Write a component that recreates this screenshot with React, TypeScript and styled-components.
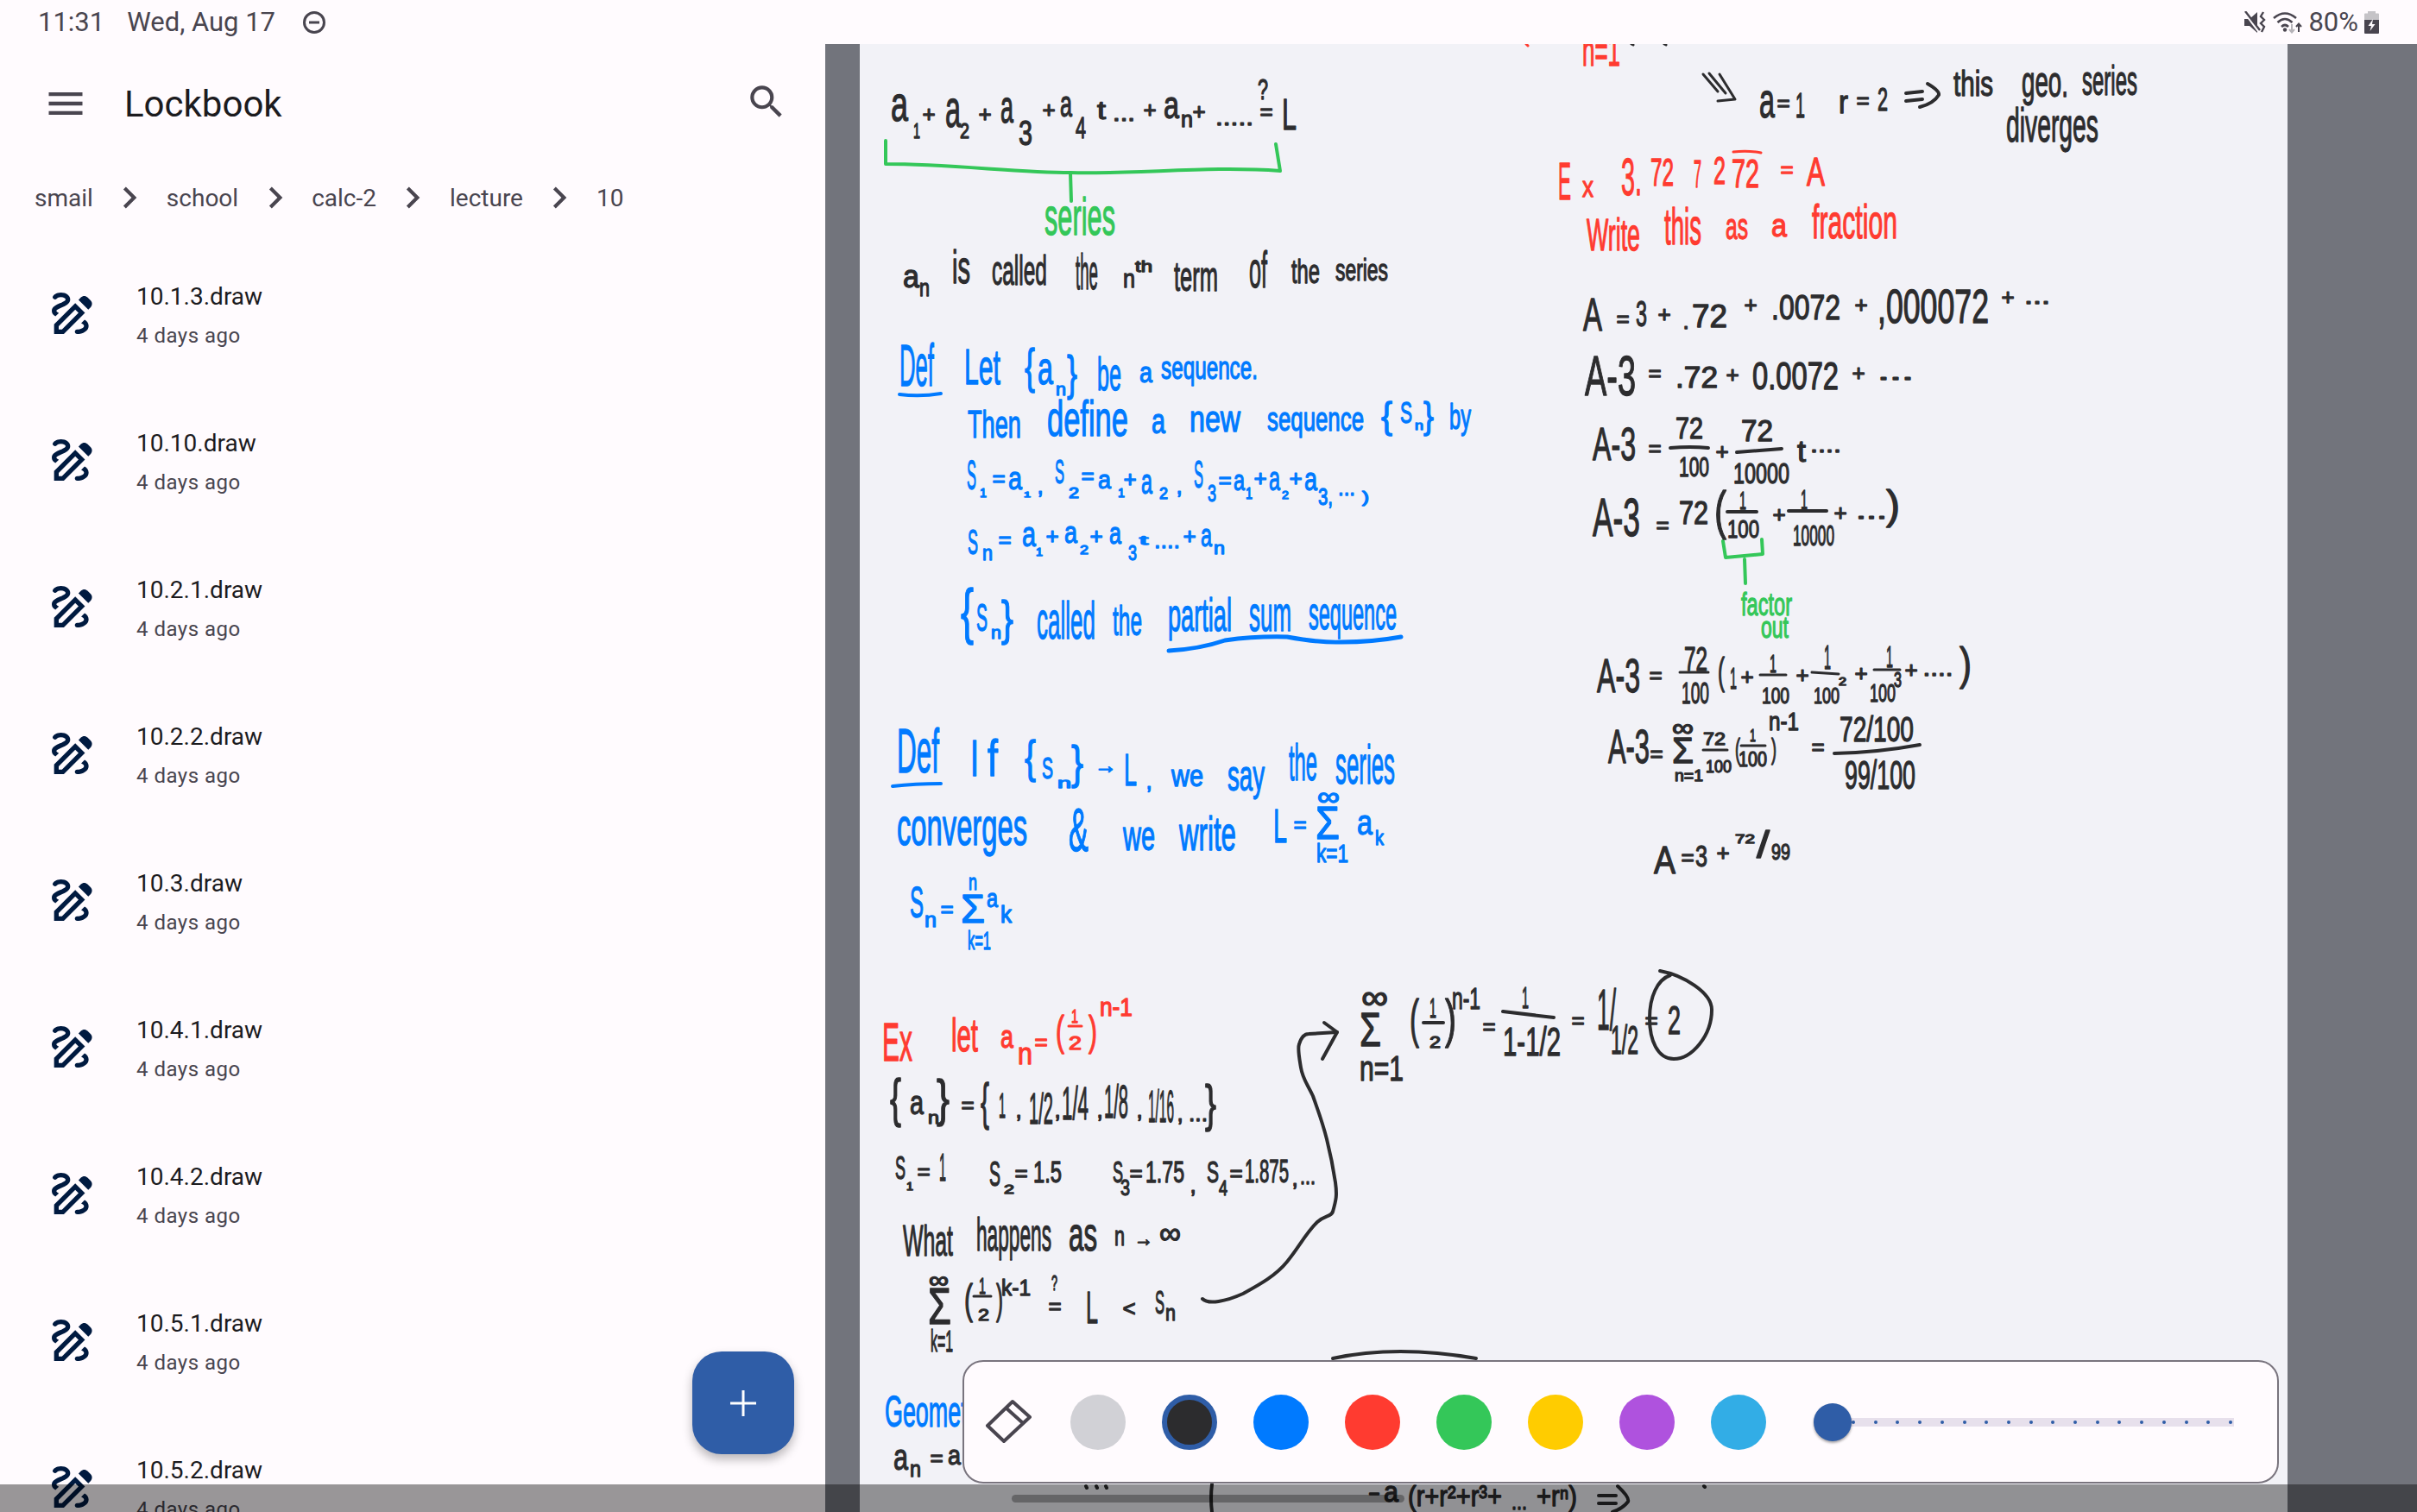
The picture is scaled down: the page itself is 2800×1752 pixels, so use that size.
import React from 'react';
import styled, { createGlobalStyle } from 'styled-components';
import { MdOutlineDraw, MdMenu, MdSearch, MdChevronRight } from 'react-icons/md';

const GlobalStyle = createGlobalStyle`
  html, body { margin: 0; padding: 0; background: #fffbfe; }
  body { font-family: Roboto, "Liberation Sans", sans-serif; }
`;

// ------- page frame -------

const Screen = styled.div`
  position: relative;
  width: 2800px;
  height: 1752px;
  display: flex;
  flex-direction: column;
  overflow: hidden;
  background: #fffbfe;
`;

const StatusBar = styled.div`
  height: 51px;
  flex: none;
  display: flex;
  align-items: center;
  padding: 0 44px;
  font-size: 31px;
  color: #49454f;
`;

const StatusDate = styled.span`
  margin-left: 26px;
`;

const StatusRight = styled.div`
  margin-left: auto;
  display: flex;
  align-items: center;
  gap: 7px;
`;

const Body = styled.div`
  flex: 1;
  min-height: 0;
  display: flex;
`;

// ------- file list pane -------

const Pane = styled.div`
  position: relative;
  width: 956px;
  flex: none;
  overflow: hidden;
`;

const AppBar = styled.div`
  height: 138px;
  display: flex;
  align-items: center;
  padding: 0 43px 0 50px;
  color: #49454f;
`;

const Title = styled.h1`
  margin: 0 0 0 42px;
  font-size: 42px;
  font-weight: 400;
  color: #1c1b1f;
`;

const SearchIcon = styled(MdSearch)`
  margin-left: auto;
  margin-top: -4px;
`;

const Crumbs = styled.div`
  height: 80px;
  margin-bottom: 9px;
  display: flex;
  align-items: center;
  gap: 17.5px;
  padding-left: 40px;
  font-size: 28px;
  color: #49454f;
`;

const Row = styled.div`
  height: 170px;
  display: flex;
  align-items: center;
  padding-left: 52px;
  gap: 42px;
`;

const RowIcon = styled(MdOutlineDraw)`
  color: #001a40;
  flex: none;
`;

const RowName = styled.div`
  font-size: 28px;
  line-height: 36px;
  color: #1c1b1f;
  margin-top: 4px;
`;

const RowDate = styled.div`
  font-size: 24px;
  line-height: 32px;
  letter-spacing: 0.5px;
  margin-top: 11px;
  color: #49454f;
`;

const Fab = styled.button`
  position: absolute;
  right: 36px;
  bottom: 67px;
  width: 118px;
  height: 119px;
  padding: 0;
  border: none;
  border-radius: 34px;
  background: #2f5da7;
  box-shadow: 0 6px 12px rgba(0, 0, 0, 0.28);
  display: flex;
  align-items: center;
  justify-content: center;
`;

// ------- drawing editor -------

const Editor = styled.div`
  flex: 1;
  display: flex;
  padding: 0 150px 0 40px;
  background: #72747c;
`;

const Sheet = styled.div`
  position: relative;
  flex: 1;
  overflow: hidden;
  background: #f2f2f7;
`;

const SheetSvg = styled.svg`
  display: block;
  width: 100%;
  height: 100%;
`;

const TONES = { k: '#2c2c2e', b: '#007aff', r: '#ff3b30', g: '#34c759' };
type Tone = keyof typeof TONES;

const InkText = styled.text<{ $tone: Tone }>`
  font-family: "Liberation Sans", sans-serif;
  fill: ${p => TONES[p.$tone]};
  stroke: ${p => TONES[p.$tone]};
  stroke-width: 1.3px;
  stroke-linejoin: round;
`;

const InkLine = styled.path<{ $tone: Tone; $w: number }>`
  fill: none;
  stroke: ${p => TONES[p.$tone]};
  stroke-width: ${p => p.$w}px;
  stroke-linecap: round;
  stroke-linejoin: round;
`;

const Toolbar = styled.div`
  position: absolute;
  left: 119px;
  right: 10px;
  bottom: 33px;
  height: 143px;
  box-sizing: border-box;
  display: flex;
  align-items: center;
  padding-left: 24px;
  background: #fffbfe;
  border: 2px solid #79747e;
  border-radius: 24px;
`;

const Swatches = styled.div`
  display: flex;
  gap: 42px;
  margin-left: 45px;
`;

const Swatch = styled.div<{ $color: string; $active?: boolean }>`
  width: 64px;
  height: 64px;
  box-sizing: border-box;
  border-radius: 50%;
  background: ${p => p.$color};
  border: ${p => (p.$active ? '6px solid #2f5da7' : 'none')};
`;

const Slider = styled.div`
  position: relative;
  width: 487px;
  margin-left: 55px;
  height: 44px;
  display: flex;
  align-items: center;
`;

const SliderTrack = styled.div`
  flex: 1;
  margin-left: 22px;
  height: 10px;
  padding: 0 2px 0 22px;
  display: flex;
  align-items: center;
  justify-content: space-between;
  background: #e7e0ec;
`;

const SliderTick = styled.div`
  width: 4px;
  height: 4px;
  border-radius: 50%;
  background: #2f5da7;
`;

const SliderThumb = styled.div`
  position: absolute;
  left: 0;
  top: 0;
  width: 44px;
  height: 44px;
  border-radius: 50%;
  background: #2f5da7;
  box-shadow: 0 2px 3px rgba(0, 0, 0, 0.35);
`;

const NavBar = styled.div`
  position: absolute;
  left: 0;
  right: 0;
  bottom: 0;
  height: 32px;
  background: rgba(0, 0, 0, 0.4);
`;

const NavPill = styled.div`
  position: absolute;
  left: 1172px;
  top: 12px;
  width: 455px;
  height: 9px;
  border-radius: 5px;
  background: rgba(0, 0, 0, 0.3);
`;

// ------- ink data -------
// fitted marks: [text, x1, x2, y1, y2]; loose marks: [text, cx, cy, width?]

type Mark = [string, number, number, number?, number?];

const HAS_ASC = /[A-Z0-9bdfhklt{}()&?!/Σ]/;
const HAS_DESC = /[gjpqy{}()]/;

const BLACK: Mark[] = [
  ['a', 1032, 1052, 110, 140], ['1', 1058, 1066, 143, 160], ['+', 1076, 133], ['a', 1095, 1113, 115, 147],
  ['2', 1112, 1123, 143, 160], ['+', 1141, 133], ['a', 1159, 1174, 115, 142], ['3', 1180, 1196, 138, 168],
  ['+', 1215, 128], ['a', 1228, 1242, 112, 135], ['4', 1246, 1258, 135, 160], ['t', 1271, 1281, 117, 138],
  ['...', 1302, 138, 26], ['+', 1332, 128], ['a', 1348, 1366, 113, 137], ['n', 1368, 1382, 133, 147],
  ['+', 1389, 130], ['.....', 1430, 143, 44], ['?', 1457, 1469, 91, 115], ['=', 1467, 130], ['L', 1485, 1502, 113, 150],
  ['a', 1046, 1065, 313, 333], ['n', 1065, 1077, 328, 343], ['is', 1103, 1124, 300, 328], ['called', 1149, 1213, 295, 330],
  ['the', 1246, 1272, 293, 335], ['n', 1301, 1315, 317, 333], ['th', 1315, 1335, 302, 315], ['term', 1360, 1411, 302, 337],
  ['of', 1447, 1468, 290, 333], ['the', 1496, 1529, 300, 328], ['series', 1547, 1608, 306, 325],
  ['a', 2038, 2056, 106, 136], ['=', 2066, 120], ['1', 2080, 2091, 106, 136], ['r', 2130, 2141, 111, 131], ['=', 2158, 117],
  ['2', 2175, 2187, 101, 128], ['this', 2263, 2309, 81, 111], ['geo.', 2342, 2396, 85, 122],
  ['series', 2412, 2476, 85, 110], ['diverges', 2324, 2431, 124, 176],
  ['A', 1834, 1856, 344, 383], ['=', 1880, 370], ['3', 1895, 1908, 347, 378], ['+', 1928, 365], ['.', 1953, 379],
  ['72', 1960, 2001, 352, 379], ['+', 2028, 354], ['.0072', 2052, 2132, 340, 370], ['+', 2156, 354], [',000072', 2175, 2304, 333, 374],
  ['+', 2326, 345], ['...', 2360, 350, 30],
  ['A-3', 1836, 1895, 411, 458], ['=', 1917, 433], ['.72', 1941, 1990, 424, 449], ['+', 2007, 435], ['0.0072', 2030, 2130, 419, 451],
  ['+', 2153, 433], ['...', 2196, 438, 42],
  ['A-3', 1845, 1895, 494, 533], ['=', 1917, 520], ['72', 1941, 1973, 483, 508], ['100', 1945, 1980, 529, 552], ['+', 1995, 524],
  ['72', 2017, 2054, 486, 511], ['10000', 2008, 2073, 536, 560], ['t', 2082, 2092, 510, 535], ['....', 2115, 522, 36],
  ['A-3', 1845, 1900, 575, 621], ['=', 1926, 609], ['72', 1945, 1979, 580, 607], ['(', 1986, 2000, 568, 625],
  ['1', 2015, 2023, 569, 590], ['100', 2001, 2038, 602, 623], ['+', 2061, 597], ['1', 2086, 2094, 567, 590],
  ['10000', 2077, 2125, 608, 632], ['+', 2132, 595], ['...', 2168, 599, 36], [')', 2185, 2201, 567, 611],
  ['A-3', 1850, 1900, 762, 802], ['=', 1918, 783], ['72', 1951, 1978, 749, 777], ['100', 1948, 1980, 789, 815],
  ['(', 1990, 1998, 760, 802], ['1', 2004, 2012, 773, 798], ['+', 2024, 785], ['1', 2050, 2058, 758, 779],
  ['100', 2041, 2073, 796, 815], ['+', 2088, 783], ['1', 2113, 2121, 747, 775], ['100', 2101, 2131, 796, 815],
  ['2', 2130, 2139, 785, 794], ['+', 2156, 781], ['1', 2185, 2193, 747, 773], ['100', 2166, 2196, 791, 813], ['3', 2194, 2203, 779, 796],
  ['+', 2214, 777], ['....', 2245, 781, 35], [')', 2270, 2284, 749, 798],
  ['A-3', 1863, 1911, 844, 884], ['=', 1919, 874], ['Σ', 1937, 1962, 853, 884], ['∞', 1937, 1962, 838, 853], ['n=1', 1940, 1973, 892, 905],
  ['72', 1973, 1999, 848, 863], ['100', 1976, 2006, 880, 895], ['(', 2010, 2016, 854, 886], ['1', 2027, 2034, 844, 859],
  ['100', 2014, 2047, 871, 888], [')', 2052, 2058, 854, 886], ['n-1', 2049, 2084, 825, 846], ['=', 2106, 866],
  ['72/100', 2131, 2217, 829, 859], ['99/100', 2137, 2219, 880, 914],
  ['A', 1916, 1941, 979, 1012], ['=', 1955, 994], ['3', 1964, 1978, 979, 1004], ['+', 1996, 989], ['72', 2010, 2033, 966, 977],
  ['/', 2035, 2050, 962, 994], ['99', 2052, 2074, 977, 996],
  ['Σ', 1575, 1600, 1171, 1212], ['∞', 1577, 1608, 1148, 1169], ['n=1', 1575, 1626, 1223, 1252], ['(', 1633, 1644, 1156, 1214],
  ['1', 1656, 1664, 1156, 1179], ['2', 1656, 1669, 1200, 1214], [')', 1674, 1687, 1156, 1214], ['n-1', 1682, 1715, 1144, 1169], ['=', 1725, 1190],
  ['1', 1763, 1771, 1143, 1168], ['1-1/2', 1741, 1808, 1189, 1223], ['=', 1828, 1183], ['1/', 1850, 1872, 1145, 1193], ['1/2', 1866, 1898, 1187, 1221],
  ['=', 1913, 1183], ['2', 1932, 1947, 1164, 1198],
  ['{', 1031, 1044, 1248, 1306], ['a', 1054, 1070, 1270, 1291], ['n', 1075, 1088, 1291, 1302], ['}', 1085, 1100, 1250, 1306],
  ['=', 1121, 1281], ['{', 1136, 1146, 1254, 1310], ['1', 1157, 1165, 1266, 1295], [',', 1180, 1293], ['1/2', 1192, 1220, 1266, 1302], [',', 1225, 1293],
  ['1/4', 1230, 1261, 1258, 1297], [',', 1274, 1293], ['1/8', 1279, 1307, 1256, 1295], [',', 1320, 1293], ['1/16', 1330, 1360, 1262, 1300],
  [',', 1367, 1297], ['...', 1388, 1297, 22], ['}', 1396, 1409, 1256, 1312],
  ['S', 1037, 1049, 1339, 1366], ['1', 1050, 1058, 1370, 1379], ['=', 1070, 1358], ['1', 1088, 1096, 1335, 1368],
  ['S', 1146, 1159, 1345, 1374], ['2', 1163, 1175, 1372, 1383], ['=', 1183, 1360], ['1.5', 1197, 1230, 1345, 1370],
  ['S', 1289, 1301, 1345, 1370], ['3', 1298, 1309, 1366, 1385], ['=', 1316, 1360], ['1.75', 1327, 1372, 1345, 1370], [',', 1382, 1380],
  ['S', 1398, 1412, 1345, 1370], ['4', 1412, 1422, 1368, 1385], ['=', 1432, 1360], ['1.875', 1442, 1493, 1343, 1370], [',', 1500, 1372], ['...', 1515, 1370, 18],
  ['What', 1046, 1104, 1418, 1455], ['happens', 1131, 1218, 1410, 1460], ['as', 1238, 1271, 1420, 1449], ['n', 1291, 1303, 1426, 1443],
  ['→', 1325, 1436, 22], ['∞', 1343, 1368, 1422, 1441],
  ['Σ', 1075, 1102, 1491, 1534], ['∞', 1076, 1099, 1478, 1492], ['k=1', 1078, 1104, 1541, 1566], ['(', 1117, 1127, 1487, 1532],
  ['1', 1134, 1142, 1480, 1499], ['2', 1133, 1146, 1516, 1530], [')', 1154, 1162, 1487, 1532], ['k-1', 1160, 1194, 1482, 1501],
  ['?', 1218, 1225, 1478, 1495], ['=', 1222, 1514], ['L', 1258, 1272, 1495, 1533], ['<', 1308, 1517], ['S', 1338, 1349, 1495, 1522], ['n', 1350, 1362, 1516, 1530],
  ['a', 1035, 1052, 1680, 1703], ['n', 1054, 1067, 1697, 1711], ['=', 1085, 1690], ['a', 1098, 1113, 1680, 1697],
  ['-', 1592, 1730, 14], ['a', 1603, 1620, 1722, 1740], ['(r+r²+r³+', 1631, 1740, 1720, 1752], ['...', 1760, 1747, 18], ['+rⁿ)', 1780, 1827, 1720, 1752],
];

const BLUE: Mark[] = [
  ['Def', 1042, 1082, 397, 447], ['Let', 1117, 1159, 403, 445], ['{', 1187, 1199, 402, 455], ['a', 1202, 1220, 417, 445], ['n', 1223, 1235, 447, 458],
  ['}', 1236, 1248, 410, 463], ['be', 1271, 1299, 413, 452], ['a', 1320, 1335, 425, 443], ['sequence.', 1345, 1457, 420, 447],
  ['Then', 1121, 1183, 475, 507], ['define', 1213, 1307, 463, 505], ['a', 1334, 1350, 480, 502], ['new', 1378, 1437, 477, 500], ['sequence', 1468, 1580, 478, 507],
  ['{', 1600, 1613, 465, 505], ['S', 1622, 1636, 465, 490], ['n', 1639, 1649, 490, 498], ['}', 1649, 1661, 465, 505], ['by', 1679, 1704, 467, 505],
  ['S', 1120, 1131, 532, 567], ['1', 1135, 1143, 565, 576], ['=', 1157, 555], ['a', 1168, 1184, 547, 567], ['1', 1186, 1194, 569, 576], [',', 1205, 570],
  ['S', 1222, 1233, 532, 560], ['2', 1238, 1250, 565, 577], ['=', 1260, 552], ['a', 1272, 1287, 550, 566], ['1', 1295, 1303, 565, 576], ['+', 1309, 556],
  ['a', 1322, 1335, 550, 572], ['2', 1343, 1353, 565, 578], [',', 1366, 570], ['S', 1383, 1394, 532, 565], ['3', 1399, 1409, 561, 581], ['=', 1419, 557],
  ['a', 1429, 1442, 550, 568], ['1', 1443, 1451, 565, 578], ['+', 1460, 555], ['a', 1470, 1483, 547, 568], ['2', 1485, 1493, 568, 578], ['+', 1501, 555],
  ['a', 1511, 1526, 548, 568], ['3,', 1527, 1544, 565, 585], ['...', 1560, 572, 20], [')', 1578, 1586, 569, 586],
  ['S', 1121, 1133, 613, 642], ['n', 1138, 1150, 636, 649], ['=', 1164, 626], ['a', 1184, 1200, 611, 633], ['1', 1200, 1208, 635, 644], ['+', 1219, 622],
  ['a', 1233, 1248, 610, 629], ['2', 1251, 1261, 631, 642], ['+', 1270, 622], ['a', 1285, 1299, 611, 630], ['3', 1307, 1317, 631, 649],
  ['t', 1320, 1330, 620, 631], ['....', 1352, 633, 30], ['+', 1378, 622], ['a', 1391, 1404, 613, 633], ['n', 1406, 1419, 631, 642],
  ['{', 1113, 1128, 681, 747], ['S', 1131, 1144, 699, 731], ['n', 1148, 1160, 729, 740], ['}', 1160, 1174, 695, 747],
  ['called', 1201, 1269, 695, 740], ['the', 1289, 1323, 701, 736], ['partial', 1353, 1427, 692, 742], ['sum', 1447, 1496, 701, 731], ['sequence', 1516, 1618, 702, 740],
  ['Def', 1039, 1088, 842, 895], ['I', 1124, 1134, 856, 899], ['f', 1144, 1156, 856, 899], ['{', 1187, 1200, 858, 906], ['S', 1207, 1220, 877, 902], ['n', 1225, 1241, 904, 913],
  ['}', 1241, 1255, 863, 913], ['→', 1281, 888, 26], ['L', 1302, 1317, 872, 910], [',', 1331, 912], ['we', 1357, 1394, 892, 911], ['say', 1422, 1465, 889, 926],
  ['the', 1493, 1526, 861, 904], ['series', 1547, 1616, 875, 908],
  ['converges', 1039, 1190, 947, 992], ['&', 1238, 1261, 935, 986], ['we', 1301, 1338, 960, 985], ['write', 1366, 1432, 944, 985], ['L', 1475, 1491, 935, 976],
  ['=', 1506, 956], ['Σ', 1524, 1552, 933, 972], ['∞', 1526, 1552, 917, 933], ['k=1', 1525, 1562, 977, 999], ['a', 1572, 1590, 945, 967], ['k', 1593, 1603, 961, 979],
  ['S', 1054, 1070, 1027, 1063], ['n', 1071, 1085, 1061, 1074], ['=', 1097, 1054], ['Σ', 1113, 1141, 1035, 1069], ['n', 1122, 1132, 1017, 1031],
  ['k=1', 1121, 1148, 1079, 1100], ['a', 1143, 1156, 1035, 1051], ['k', 1159, 1172, 1049, 1069],
  ['Geometric', 1025, 1149, 1616, 1653],
];

const RED: Mark[] = [
  ['Ex', 1022, 1057, 1183, 1229], ['let', 1102, 1133, 1179, 1218], ['a', 1159, 1174, 1194, 1214], ['n', 1179, 1196, 1214, 1233], ['=', 1206, 1208],
  ['(', 1223, 1233, 1175, 1221], ['1', 1241, 1249, 1169, 1185], ['2', 1238, 1253, 1200, 1216], [')', 1261, 1271, 1175, 1221], ['n-1', 1274, 1312, 1156, 1177],
  ['n=1', 1833, 1877, 40, 76],
  ['E', 1805, 1820, 186, 231], ['x', 1833, 1846, 210, 228], ['3.', 1878, 1902, 181, 226], ['72', 1912, 1939, 183, 215], ['7', 1962, 1971, 185, 217],
  ['2', 1985, 1999, 181, 213], ['72', 2006, 2038, 183, 217], ['=', 2070, 197], ['A', 2093, 2114, 181, 215],
  ['Write', 1838, 1900, 252, 290], ['this', 1928, 1971, 240, 283], ['as', 1999, 2025, 254, 277], ['a', 2052, 2070, 254, 274], ['fraction', 2099, 2198, 235, 276],
];

const GREEN: Mark[] = [
  ['series', 1210, 1292, 240, 272],
  ['factor', 2017, 2076, 686, 713],
  ['out', 2040, 2072, 714, 739],
];

const STROKES: [Tone, number, string][] = [
  ['g', 4, 'M1026 163L1026 190C1100 190 1180 200 1240 200C1320 202 1400 192 1483 198L1478 167'],
  ['g', 4, 'M1240 200L1241 233'],
  ['g', 4, 'M1996 627L1999 646L2042 642L2041 625'],
  ['g', 4, 'M2021 648L2022 676'],
  ['b', 4, 'M1042 457Q1066 460 1090 456'],
  ['b', 5, 'M1354 754Q1390 752 1419 742Q1455 737 1491 738Q1530 745 1554 744Q1590 744 1623 738'],
  ['b', 4, 'M1034 911Q1060 908 1090 908'],
  ['r', 3, 'M2008 176Q2025 174 2040 177'],
  ['r', 3, 'M1238 1189L1253 1189'],
  // long arrow
  ['k', 4, 'M1393 1505C1400 1512 1420 1508 1440 1499C1460 1488 1478 1478 1491 1462C1505 1445 1512 1430 1526 1416C1535 1408 1542 1410 1544 1404C1548 1390 1549 1385 1547 1370C1544 1350 1542 1340 1537 1320C1532 1300 1528 1290 1521 1270C1514 1255 1509 1250 1507 1237C1505 1225 1503 1215 1505 1210C1508 1200 1512 1198 1516 1198L1549 1196'],
  ['k', 4, 'M1534 1185L1549 1196L1532 1227'],
  // circle round the 2
  ['k', 4, 'M1923 1125C1950 1130 1983 1150 1983 1170C1983 1200 1960 1227 1939 1227C1920 1227 1911 1205 1911 1180C1911 1155 1920 1135 1935 1130'],
  // implies arrows
  ['k', 4, 'M2208 108L2227 106M2208 117L2227 115M2233 97Q2247 105 2246 110Q2240 120 2224 124'],
  ['k', 4, 'M1852 1733L1872 1733M1852 1742L1872 1742M1874 1722Q1888 1735 1886 1740Q1880 1748 1868 1752'],
  // fraction bars
  ['k', 4, 'M1649 1185L1672 1185'],
  ['k', 4, 'M1741 1172L1800 1179'],
  ['k', 4, 'M1935 519Q1958 517 1979 519'],
  ['k', 4, 'M2012 524L2064 520'],
  ['k', 4, 'M2001 593L2035 593'],
  ['k', 4, 'M2072 592L2116 592'],
  ['k', 3, 'M1946 779L1979 779'],
  ['k', 3, 'M2039 782L2069 782'],
  ['k', 3, 'M2099 779L2130 781'],
  ['k', 3, 'M2171 776L2201 776'],
  ['k', 3, 'M1973 869L2001 869'],
  ['k', 3, 'M2017 864L2045 864'],
  ['k', 3, 'M1128 1502L1148 1502'],
  ['k', 4, 'M2125 873Q2175 872 2224 863'],
  // triple arrow at the top
  ['k', 3, 'M1973 86L1990 106'],
  ['k', 3, 'M1980 85L1999 108'],
  ['k', 3, 'M1992 86L2010 115L1990 117'],
  // parts hidden by the toolbar
  ['k', 4, 'M1544 1574Q1618 1558 1710 1574'],
  ['k', 4, 'M1404 1720Q1402 1736 1404 1752'],
  ['k', 4, 'M1258 1722L1259 1724M1270 1722L1271 1724M1281 1722L1282 1724M1974 1722L1975 1723'],
  ['k', 3, 'M1890 51L1892 52M1928 51L1930 52'],
  ['r', 3, 'M1768 51L1770 53'],
];

const InkMark: React.FC<{ mark: Mark; tone: Tone }> = ({ mark, tone }) => {
  const [text, a, b, c, d] = mark;
  if (d === undefined) {
    // loose mark: operator or dots, centred on a point
    const size = 26;
    const isDots = /^[.,]+$/.test(text);
    return (
      <InkText
        $tone={tone}
        x={a}
        y={isDots ? b + 2 : b + size * 0.3}
        fontSize={size}
        textAnchor="middle"
        textLength={c}
        lengthAdjust="spacingAndGlyphs"
      >
        {text}
      </InkText>
    );
  }
  const top = HAS_ASC.test(text) ? 0.73 : 0.53;
  const bottom = HAS_DESC.test(text) ? 0.21 : 0;
  const size = (d - (c as number)) / (top + bottom);
  return (
    <InkText
      $tone={tone}
      x={a}
      y={d - bottom * size}
      fontSize={size}
      textLength={b - a}
      lengthAdjust="spacingAndGlyphs"
    >
      {text}
    </InkText>
  );
};

// ------- status bar icons -------

const DndIcon = () => (
  <svg width="28" height="28" viewBox="0 0 28 28" style={{ marginLeft: 31 }}>
    <circle cx="14" cy="14" r="11.5" fill="none" stroke="#49454f" strokeWidth="3" />
    <rect x="8" y="12.5" width="12" height="3" fill="#49454f" />
  </svg>
);

const MuteIcon = () => (
  <svg width="26" height="26" viewBox="0 0 26 26">
    <path d="M0 9h6l9-8v24l-9-8H0z" fill="#49454f" />
    <path d="M0 1l18 24" stroke="#fffbfe" strokeWidth="3" />
    <path d="M1 0l17 22" stroke="#49454f" strokeWidth="2.4" />
    <path d="M22 1l-3 5 4 4-4 4 4 4-3 6" fill="none" stroke="#49454f" strokeWidth="2.4" />
  </svg>
);

const WifiIcon = () => (
  <svg width="34" height="26" viewBox="0 0 34 26">
    <g fill="none" stroke="#49454f" strokeWidth="2.6">
      <path d="M1 8Q14-3 27 8" />
      <path d="M5.5 13Q14 5 22.5 13" />
      <path d="M10 18Q14 14 18 18" />
    </g>
    <circle cx="14" cy="21.5" r="2.2" fill="#49454f" />
    <path d="M22 15v9M19 21l3 3.5 3-3.5" fill="none" stroke="#b5b3b8" strokeWidth="2" />
    <path d="M30 24v-9M27 18l3-3.5 3 3.5" fill="none" stroke="#49454f" strokeWidth="2" />
  </svg>
);

const BatteryIcon = () => (
  <svg width="17" height="26" viewBox="0 0 17 26">
    <path d="M4 0h9v2.5h3a1 1 0 0 1 1 1V10H0V3.5a1 1 0 0 1 1-1h3z" fill="#c5c3c7" />
    <path d="M0 10h17v15a1 1 0 0 1-1 1H1a1 1 0 0 1-1-1z" fill="#49454f" />
    <path d="M10 9L4.5 17h3.5L6.5 23 12.5 15H9z" fill="#fffbfe" />
  </svg>
);

const EraserIcon = () => (
  <svg width="54" height="54" viewBox="0 0 54 54">
    <g fill="none" stroke="#49454f" strokeWidth="4" strokeLinejoin="round">
      <path d="M32 3L52 21L22 49L3 31Z" />
      <path d="M24 10L44 28" />
    </g>
  </svg>
);

const PlusIcon = () => (
  <svg width="32" height="32" viewBox="0 0 32 32">
    <path d="M16 1v30M1 16h30" stroke="#fff" strokeWidth="3" />
  </svg>
);

// ------- data -------

const CRUMBS = ['smail', 'school', 'calc-2', 'lecture', '10'];
const FILES = ['10.1.3', '10.10', '10.2.1', '10.2.2', '10.3', '10.4.1', '10.4.2', '10.5.1', '10.5.2'];
const SWATCHES = ['#d1d1d6', '#2c2c2e', '#007aff', '#ff3b30', '#34c759', '#ffcc00', '#af52de', '#32ade6'];
const TICKS = Array.from({ length: 18 }, (_, i) => i);

const App: React.FC = () => (
  <Screen>
    <GlobalStyle />
    <StatusBar>
      <span>11:31</span>
      <StatusDate>Wed, Aug 17</StatusDate>
      <DndIcon />
      <StatusRight>
        <MuteIcon />
        <WifiIcon />
        <span>80%</span>
        <BatteryIcon />
      </StatusRight>
    </StatusBar>
    <Body>
      <Pane>
        <AppBar>
          <MdMenu size={52} />
          <Title>Lockbook</Title>
          <SearchIcon size={50} />
        </AppBar>
        <Crumbs>
          {CRUMBS.map((c, i) => (
            <React.Fragment key={c}>
              <span>{c}</span>
              {i < CRUMBS.length - 1 && <MdChevronRight size={50} />}
            </React.Fragment>
          ))}
        </Crumbs>
        {FILES.map(f => (
          <Row key={f}>
            <RowIcon size={64} />
            <div>
              <RowName>{f}.draw</RowName>
              <RowDate>4 days ago</RowDate>
            </div>
          </Row>
        ))}
        <Fab>
          <PlusIcon />
        </Fab>
      </Pane>
      <Editor>
        <Sheet>
          <SheetSvg viewBox="996 51 1654 1701">
            {STROKES.map(([tone, w, d], i) => (
              <InkLine key={i} $tone={tone} $w={w} d={d} />
            ))}
            {BLACK.map((m, i) => <InkMark key={i} mark={m} tone="k" />)}
            {BLUE.map((m, i) => <InkMark key={i} mark={m} tone="b" />)}
            {RED.map((m, i) => <InkMark key={i} mark={m} tone="r" />)}
            {GREEN.map((m, i) => <InkMark key={i} mark={m} tone="g" />)}
          </SheetSvg>
          <Toolbar>
            <EraserIcon />
            <Swatches>
              {SWATCHES.map((c, i) => (
                <Swatch key={c} $color={c} $active={i === 1} />
              ))}
            </Swatches>
            <Slider>
              <SliderTrack>
                {TICKS.map(t => <SliderTick key={t} />)}
              </SliderTrack>
              <SliderThumb />
            </Slider>
          </Toolbar>
        </Sheet>
      </Editor>
    </Body>
    <NavBar>
      <NavPill />
    </NavBar>
  </Screen>
);

export default App;
